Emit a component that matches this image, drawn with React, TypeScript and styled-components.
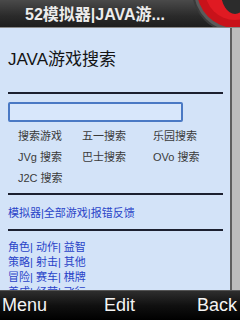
import React from "react";
import styled, { createGlobalStyle } from "styled-components";

const Global = createGlobalStyle`
  html, body { margin: 0; padding: 0; background: #000; }
  body { width: 240px; height: 320px; overflow: hidden; }
`;

const FONT = `"Liberation Sans", Arial, "Noto Sans CJK SC", sans-serif`;

const Screen = styled.div`
  width: 240px;
  height: 320px;
  display: flex;
  flex-direction: column;
  font-family: ${FONT};
  overflow: hidden;
`;

const TitleBar = styled.div`
  height: 27px;
  flex: 0 0 27px;
  display: flex;
  align-items: center;
  background: linear-gradient(#4a4a4a, #2a2a2a 60%, #1e1e1e);
  border-bottom: 1px solid #8a8a8a;
  overflow: hidden;
`;

const TitleText = styled.div`
  flex: 1 1 auto;
  min-width: 0;
  padding-left: 25px;
  padding-bottom: 2px;
  color: #ececec;
  font-size: 16px;
  font-weight: 600;
  white-space: nowrap;
`;

const Logo = styled.svg`
  flex: 0 0 48px;
  display: block;
`;

const Main = styled.div`
  flex: 1;
  display: flex;
  overflow: hidden;
  background: #d3e3f8;
`;

const Content = styled.div`
  flex: 1;
  padding: 0 7px 0 8px;
  overflow: hidden;
`;

const Heading = styled.div`
  margin-top: 22px;
  font-size: 17px;
  line-height: 20px;
  color: #141414;
`;

const Rule = styled.div<{ $top: number }>`
  margin-top: ${(p) => p.$top}px;
  height: 2px;
  background: #1c2030;
`;

const SearchInput = styled.div`
  margin-top: 8px;
  width: 175px;
  height: 20px;
  box-sizing: border-box;
  border: 2px solid #4a79c4;
  border-radius: 2px;
  background: #d8e7fb;
`;

const Grid = styled.div`
  margin-top: 2px;
  padding-left: 10px;
  display: grid;
  grid-template-columns: 64px 71px 1fr;
  grid-auto-rows: 21px;
  align-items: center;
  font-size: 11px;
  color: #3a3a3a;
`;

const LinkLine = styled.div<{ $top: number }>`
  margin-top: ${(p) => p.$top}px;
  font-size: 11px;
  line-height: 15px;
  color: #2a43c8;
  white-space: nowrap;
`;

const Scrollbar = styled.div`
  width: 8px;
  flex: 0 0 8px;
  border-left: 2px solid #5e5e5e;
  background: #bcbcbc;
`;

const SoftBar = styled.div`
  height: 30px;
  flex: 0 0 30px;
  box-sizing: border-box;
  border-top: 1px solid #555;
  background: linear-gradient(#2e2e2e, #101010 50%, #000);
  display: grid;
  grid-template-columns: 1fr auto 1fr;
  align-items: center;
  padding: 0 3px 0 2px;
  color: #f4f4f4;
  font-size: 18px;
`;

const SoftKey = styled.div<{ $align: "left" | "center" | "right" }>`
  text-align: ${(p) => p.$align};
`;

const gridItems = ["搜索游戏", "五一搜索", "乐园搜索", "JVg 搜索", "巴士搜索", "OVo 搜索", "J2C 搜索"];

export default function App() {
  return (
    <Screen>
      <Global />
      <TitleBar>
        <TitleText>52模拟器|JAVA游...</TitleText>
        <Logo width="48" height="27" viewBox="0 0 48 27">
          <circle cx="43" cy="-10" r="43" fill="#3a3a3a" />
          <circle cx="43" cy="-10" r="41" fill="#5a5a5a" />
          <circle cx="43" cy="-10" r="38" fill="#c8121a" />
          <circle cx="43" cy="-10" r="30" fill="#e01a22" />
          <ellipse cx="43" cy="-8" rx="14" ry="22" fill="#2c2c2c" />
        </Logo>
      </TitleBar>
      <Main>
        <Content>
          <Heading>JAVA游戏搜索</Heading>
          <Rule $top={22} />
          <SearchInput />
          <Grid>
            {gridItems.map((t) => (
              <div key={t}>{t}</div>
            ))}
          </Grid>
          <Rule $top={6} />
          <LinkLine $top={11}>模拟器|全部游戏|报错反馈</LinkLine>
          <Rule $top={8} />
          <LinkLine $top={9}>角色| 动作| 益智</LinkLine>
          <LinkLine $top={0}>策略| 射击| 其他</LinkLine>
          <LinkLine $top={0}>冒险| 赛车| 棋牌</LinkLine>
          <LinkLine $top={0}>养成| 经营| 飞行</LinkLine>
        </Content>
        <Scrollbar />
      </Main>
      <SoftBar>
        <SoftKey $align="left">Menu</SoftKey>
        <SoftKey $align="center">Edit</SoftKey>
        <SoftKey $align="right">Back</SoftKey>
      </SoftBar>
    </Screen>
  );
}
